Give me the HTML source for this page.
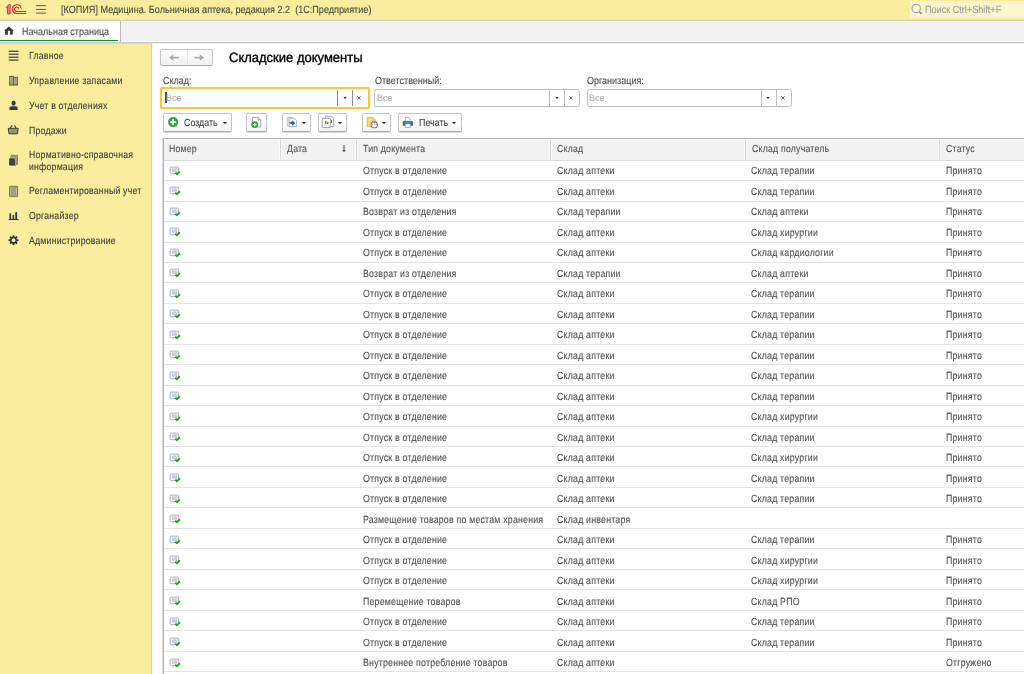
<!DOCTYPE html>
<html><head><meta charset="utf-8">
<style>
html,body{margin:0;padding:0;}
body{width:1024px;height:674px;overflow:hidden;position:relative;background:#fff;font-family:"Liberation Sans",sans-serif;color:#4d4d4d;text-rendering:geometricPrecision;}
.t{position:absolute;white-space:nowrap;will-change:transform;-webkit-text-stroke-width:0.1px;}
.ic{position:absolute;line-height:0;}
.ic svg{display:block;}
#top{position:absolute;left:0;top:0;width:1024px;height:20px;background:#fbed9e;}
#tabs{position:absolute;left:0;top:21px;width:1024px;height:21px;background:#f2f2f2;}
#tab1{position:absolute;left:0;top:0;width:120px;height:21px;background:#fff;border-right:1px solid #b9b9b9;}
#tabline{position:absolute;left:0;top:18.7px;width:118px;height:1.4px;background:#0f9030;}
#side{position:absolute;left:0;top:44px;width:151px;height:630px;background:#fbed9e;border-right:1px solid #dfd18c;}
#content{position:absolute;left:152px;top:44px;width:872px;height:630px;background:#fff;}
.hl{position:absolute;left:164px;width:860px;height:1px;background:#e4e4e4;}
.btn{position:absolute;top:113px;height:16.5px;border:1px solid #c4c4c4;border-bottom-color:#b0b0b0;border-radius:2px;background:linear-gradient(#fff 0,#fff 60%,#f1f1f1 100%);box-shadow:0 1px 0 #d4d4d4;}
.fld{position:absolute;top:89px;height:16px;border:1px solid #bcbcbc;border-radius:3px;background:#fff;}
.sep{position:absolute;top:1px;width:1px;height:16px;background:#c2c2c2;}
.tri{position:absolute;width:0;height:0;border-left:2.5px solid transparent;border-right:2.5px solid transparent;border-top:3px solid #3a3a3a;}
</style></head><body>
<div id="top">
  <svg style="position:absolute;left:0;top:0" width="30" height="20" viewBox="0 0 30 20">
    <path d="M6.1 7.5 L8.9 4.4 L10.2 4.4 L10.2 13.9 L7.5 13.9 L7.5 7.2 L6.6 8.2 Z" fill="#e8837b" stroke="#d9262b" stroke-width="0.85" stroke-linejoin="round"/>
    <path d="M21.1 8.2 A4.3 4.3 0 1 0 16.9 13.4 L25.8 13.4" stroke="#d9262b" stroke-width="1.05" fill="none" stroke-linecap="round"/>
    <path d="M18.5 8.2 A2.2 2.2 0 1 0 16.6 11.5 L25.8 11.5" stroke="#d9262b" stroke-width="1.05" fill="none" stroke-linecap="round"/>
  </svg>
  <svg style="position:absolute;left:35px;top:4px" width="12" height="11" viewBox="0 0 12 11">
    <rect x="1" y="1.1" width="10" height="1.1" fill="#6f6a52"/>
    <rect x="1" y="4.9" width="10" height="1.1" fill="#6f6a52"/>
    <rect x="1" y="8.6" width="10" height="1.1" fill="#6f6a52"/>
  </svg>
  <div class="t" style="left:60.8px;top:6.00px;font-size:9.1px;line-height:9.1px;transform:scaleY(1.15);transform-origin:0 7.70px;color:#4a4a40;">[КОПИЯ] Медицина. Больничная аптека, редакция 2.2&nbsp;&nbsp;(1С:Предприятие)</div>
  <div style="position:absolute;left:910px;top:1px;width:114px;height:17px;background:#fdf5cb;"></div>
  <svg style="position:absolute;left:910px;top:2px" width="14" height="14" viewBox="0 0 14 14"><circle cx="6.2" cy="6.4" r="4.2" stroke="#9e9e9e" stroke-width="1.1" fill="none"/><path d="M9.2 9.5 L11.6 11.9" stroke="#8e8e8e" stroke-width="1.6"/></svg>
  <div class="t" style="left:925.0px;top:5.60px;font-size:9.1px;line-height:9.1px;transform:scaleY(1.15);transform-origin:0 7.70px;color:#9c9c9c;">Поиск Ctrl+Shift+F</div>
  <div style="position:absolute;left:0;top:18px;width:1024px;height:1px;background:#fcefa6;"></div><div style="position:absolute;left:0;top:19px;width:1024px;height:1px;background:#f3e391;"></div><div style="position:absolute;left:0;top:20px;width:1024px;height:1px;background:#ddd6ab;"></div>
</div>
<div id="tabs">
  <div id="tab1">
    <svg style="position:absolute;left:2px;top:3px" width="14" height="13" viewBox="0 0 14 13"><path d="M6.9 2.6 L12 6.8 L10.8 6.8 L10.8 10.8 L8.1 10.8 L8.1 6.8 L5.9 6.8 L5.9 10.8 L3.1 10.8 L3.1 6.8 L1.9 6.8 Z" fill="#3a3a3a"/></svg>
    <div id="tabline"></div>
  </div>
  <div style="position:absolute;left:121px;top:0;width:903px;height:1px;background:#fafafa;"></div>
  <div class="t" style="left:22.1px;top:6.98px;font-size:9.0px;line-height:9.0px;transform:scaleY(1.15);transform-origin:0 7.62px;color:#4d4d4d;">Начальная страница</div>
</div>
<div style="position:absolute;left:121px;top:41px;width:903px;height:1px;background:#fbfbfb;"></div>
<div style="position:absolute;left:0;top:42px;width:152px;height:1px;background:#c9cad6;"></div>
<div style="position:absolute;left:152px;top:42px;width:872px;height:1px;background:#c6c6c8;"></div>
<div style="position:absolute;left:0;top:43px;width:152px;height:1px;background:#e9da94;"></div>
<div style="position:absolute;left:152px;top:43px;width:872px;height:1px;background:#ebebeb;"></div>
<div id="side">
</div>
<!-- sidebar icons -->
<svg style="position:absolute;left:6px;top:46px" width="16" height="16" viewBox="0 0 16 16"><g fill="#34343a"><rect x="2.7" y="4.7" width="9.8" height="1.15"/><rect x="2.7" y="7.65" width="9.8" height="1.15"/><rect x="2.7" y="10.65" width="9.8" height="1.15"/><rect x="2.7" y="13.5" width="9.8" height="1.15"/></g></svg>
<svg style="position:absolute;left:6px;top:72px" width="16" height="16" viewBox="0 0 16 16"><rect x="3.2" y="4" width="4.4" height="9.3" fill="#a9a27d"/><rect x="7.6" y="5" width="4.3" height="8.3" fill="#a9a27d"/><g fill="#5f5b48"><rect x="3.1" y="3.9" width="4.6" height="1"/><rect x="3.1" y="12.3" width="4.6" height="1.1"/><rect x="7" y="3.9" width="0.9" height="9.5"/><rect x="7.6" y="4.9" width="4.4" height="0.8"/><rect x="7.6" y="12.3" width="4.4" height="1.1"/><rect x="11.3" y="4.9" width="0.7" height="8.5"/><rect x="3.1" y="3.9" width="0.6" height="9.5"/></g></svg>
<svg style="position:absolute;left:6px;top:97px" width="16" height="16" viewBox="0 0 16 16"><ellipse cx="7.6" cy="6.1" rx="2.1" ry="2.55" fill="#37373d"/><path d="M3.4 13 L3.4 10.8 Q3.6 9.3 5.6 9.3 L9.6 9.3 Q11.6 9.3 11.6 10.8 L11.6 13 Z" fill="#37373d"/></svg>
<svg style="position:absolute;left:6px;top:121px" width="16" height="16" viewBox="0 0 16 16"><path d="M4.3 7 L6.3 4.3 M8.5 4.3 L10 7" stroke="#3e3e3a" stroke-width="1.1" fill="none"/><path d="M2.3 7.3 L12.2 7.3 L11.5 12.8 L3 12.8 Z" fill="#a39c78" stroke="#3a3a38" stroke-width="1"/><path d="M3.7 9.3 L11 9.3" stroke="#8a8464" stroke-width="0.8"/><path d="M4 11.2 L10.6 11.2" stroke="#8a8464" stroke-width="0.7"/></svg>
<svg style="position:absolute;left:6px;top:152px" width="16" height="16" viewBox="0 0 16 16"><rect x="5.6" y="3.2" width="6.1" height="9" fill="#aea781" stroke="#6f6a52" stroke-width="0.6"/><rect x="4.6" y="4.8" width="5.5" height="8.5" fill="#b5ae88" stroke="#77725a" stroke-width="0.5"/><rect x="3.6" y="6.9" width="5" height="6" fill="#45453f" stroke="#2f2f35" stroke-width="0.7"/></svg>
<svg style="position:absolute;left:6px;top:183px" width="16" height="16" viewBox="0 0 16 16"><rect x="3.5" y="3.3" width="8.1" height="10.3" rx="0.6" fill="#a69f79" stroke="#6a664f" stroke-width="0.8"/><path d="M4.6 4.5 L4.6 12.3 M10.5 4.5 L10.5 12.3" stroke="#cfc79a" stroke-width="0.7"/></svg>
<svg style="position:absolute;left:6px;top:208px" width="16" height="16" viewBox="0 0 16 16"><g fill="#30303a"><rect x="3.5" y="5.3" width="1.6" height="6.2"/><rect x="6.6" y="7" width="1.5" height="4.5"/><rect x="9.3" y="4.1" width="1.8" height="7.4"/><rect x="2.6" y="11" width="10" height="1"/></g></svg>
<svg style="position:absolute;left:6px;top:232px" width="16" height="16" viewBox="0 0 16 16"><g transform="translate(7.5,8.2)" fill="#34343a"><rect x="-0.95" y="-4.9" width="1.9" height="2.4" transform="rotate(0)"/><rect x="-0.95" y="-4.9" width="1.9" height="2.4" transform="rotate(45)"/><rect x="-0.95" y="-4.9" width="1.9" height="2.4" transform="rotate(90)"/><rect x="-0.95" y="-4.9" width="1.9" height="2.4" transform="rotate(135)"/><rect x="-0.95" y="-4.9" width="1.9" height="2.4" transform="rotate(180)"/><rect x="-0.95" y="-4.9" width="1.9" height="2.4" transform="rotate(225)"/><rect x="-0.95" y="-4.9" width="1.9" height="2.4" transform="rotate(270)"/><rect x="-0.95" y="-4.9" width="1.9" height="2.4" transform="rotate(315)"/><circle r="3.4"/><circle r="1.9" fill="#fbed9e"/></g></svg>
<div class="t" style="left:29.0px;top:51.89px;font-size:8.75px;line-height:8.75px;transform:scaleY(1.18);transform-origin:0 7.41px;color:#3f3f38;letter-spacing:0.2px;">Главное</div>
<div class="t" style="left:29.0px;top:76.79px;font-size:8.75px;line-height:8.75px;transform:scaleY(1.18);transform-origin:0 7.41px;color:#3f3f38;letter-spacing:0.2px;">Управление запасами</div>
<div class="t" style="left:29.0px;top:101.69px;font-size:8.75px;line-height:8.75px;transform:scaleY(1.18);transform-origin:0 7.41px;color:#3f3f38;letter-spacing:0.2px;">Учет в отделениях</div>
<div class="t" style="left:29.0px;top:126.59px;font-size:8.75px;line-height:8.75px;transform:scaleY(1.18);transform-origin:0 7.41px;color:#3f3f38;letter-spacing:0.2px;">Продажи</div>
<div class="t" style="left:29.0px;top:150.99px;font-size:8.75px;line-height:8.75px;transform:scaleY(1.18);transform-origin:0 7.41px;color:#3f3f38;letter-spacing:0.2px;">Нормативно-справочная</div>
<div class="t" style="left:29.0px;top:162.69px;font-size:8.75px;line-height:8.75px;transform:scaleY(1.18);transform-origin:0 7.41px;color:#3f3f38;letter-spacing:0.2px;">информация</div>
<div class="t" style="left:29.0px;top:186.89px;font-size:8.75px;line-height:8.75px;transform:scaleY(1.18);transform-origin:0 7.41px;color:#3f3f38;letter-spacing:0.2px;">Регламентированный учет</div>
<div class="t" style="left:29.0px;top:211.79px;font-size:8.75px;line-height:8.75px;transform:scaleY(1.18);transform-origin:0 7.41px;color:#3f3f38;letter-spacing:0.2px;">Органайзер</div>
<div class="t" style="left:29.0px;top:236.59px;font-size:8.75px;line-height:8.75px;transform:scaleY(1.18);transform-origin:0 7.41px;color:#3f3f38;letter-spacing:0.2px;">Администрирование</div>

<div id="content"></div>
<div style="position:absolute;left:152px;top:44px;width:1px;height:630px;background:#f6f6f6;"></div>
<!-- nav buttons -->
<div style="position:absolute;left:160px;top:49px;width:51px;height:15px;border:1px solid #c6c6c6;border-bottom-color:#aaa;border-radius:2px;background:linear-gradient(#fefefe,#f1f1f1);"></div>
<div style="position:absolute;left:186.5px;top:50px;width:1px;height:15px;background:#e3e3e3;"></div>
<svg style="position:absolute;left:156px;top:44px" width="60" height="26" viewBox="0 0 60 26"><g fill="#a9a9a9"><path d="M13.1 13.6 L17.3 10.4 L17.3 16.8 Z"/><rect x="16.5" y="12.8" width="6.4" height="1.6"/><path d="M48 13.6 L43.8 10.4 L43.8 16.8 Z"/><rect x="38.4" y="12.8" width="6.2" height="1.6"/></g></svg>
<div class="t" style="left:229.0px;top:50.70px;font-size:13.0px;line-height:13.0px;transform:scaleY(1.04);transform-origin:0 11.00px;color:#000;-webkit-text-stroke-width:0.35px;">Складские документы</div>

<!-- filters -->
<div class="t" style="left:162.5px;top:76.58px;font-size:9.0px;line-height:9.0px;transform:scaleY(1.15);transform-origin:0 7.62px;color:#4d4d4d;">Склад:</div>
<div class="t" style="left:374.5px;top:76.58px;font-size:9.0px;line-height:9.0px;transform:scaleY(1.15);transform-origin:0 7.62px;color:#4d4d4d;">Ответственный:</div>
<div class="t" style="left:586.5px;top:76.58px;font-size:9.0px;line-height:9.0px;transform:scaleY(1.15);transform-origin:0 7.62px;color:#4d4d4d;">Организация:</div>
<div style="position:absolute;left:160px;top:87px;width:206px;height:18px;border:2px solid #f8ca2a;border-radius:1.5px;background:#fff;"></div>
<div style="position:absolute;left:337px;top:90px;width:1px;height:15.5px;background:#8e8e8e;"></div>
<div style="position:absolute;left:352px;top:90px;width:1px;height:15.5px;background:#8e8e8e;"></div>
<svg style="position:absolute;left:341.50px;top:95.90px" width="6" height="4" viewBox="0 0 6 4"><path d="M1.3 1 L4.7 1 L3 3.1 Z" fill="#2a2a2a"/></svg>
<svg style="position:absolute;left:356.30px;top:94.90px" width="6" height="6" viewBox="0 0 6 6"><path d="M1.4 1.4 L4.6 4.6 M4.6 1.4 L1.4 4.6" stroke="#666" stroke-width="1"/></svg>
<div style="position:absolute;left:165px;top:92px;width:1.5px;height:11px;background:#4a4a4a;"></div>
<div class="t" style="left:166.0px;top:93.88px;font-size:9.0px;line-height:9.0px;transform:scaleY(1.04);transform-origin:0 7.62px;color:#b0b0b0;">Все</div>
<div style="position:absolute;left:374px;top:89px;width:204px;height:16px;border:1px solid #bdbdbd;border-radius:2.5px;background:#fff;"></div>
<div style="position:absolute;left:549px;top:90px;width:1px;height:16px;background:#bdbdbd;"></div>
<div style="position:absolute;left:564px;top:90px;width:1px;height:16px;background:#bdbdbd;"></div>
<svg style="position:absolute;left:553.50px;top:95.90px" width="6" height="4" viewBox="0 0 6 4"><path d="M1.3 1 L4.7 1 L3 3.1 Z" fill="#2a2a2a"/></svg>
<svg style="position:absolute;left:568.30px;top:94.90px" width="6" height="6" viewBox="0 0 6 6"><path d="M1.4 1.4 L4.6 4.6 M4.6 1.4 L1.4 4.6" stroke="#666" stroke-width="1"/></svg>
<div class="t" style="left:376.7px;top:93.88px;font-size:9.0px;line-height:9.0px;transform:scaleY(1.04);transform-origin:0 7.62px;color:#b0b0b0;">Все</div>
<div style="position:absolute;left:587px;top:89px;width:203px;height:16px;border:1px solid #bdbdbd;border-radius:2.5px;background:#fff;"></div>
<div style="position:absolute;left:761px;top:90px;width:1px;height:16px;background:#bdbdbd;"></div>
<div style="position:absolute;left:776px;top:90px;width:1px;height:16px;background:#bdbdbd;"></div>
<svg style="position:absolute;left:765.10px;top:95.90px" width="6" height="4" viewBox="0 0 6 4"><path d="M1.3 1 L4.7 1 L3 3.1 Z" fill="#2a2a2a"/></svg>
<svg style="position:absolute;left:780.40px;top:94.90px" width="6" height="6" viewBox="0 0 6 6"><path d="M1.4 1.4 L4.6 4.6 M4.6 1.4 L1.4 4.6" stroke="#666" stroke-width="1"/></svg>
<div class="t" style="left:589.0px;top:93.88px;font-size:9.0px;line-height:9.0px;transform:scaleY(1.04);transform-origin:0 7.62px;color:#b0b0b0;">Все</div>

<!-- command bar -->
<div class="btn" style="left:163px;width:66.5px;"></div>
<svg style="position:absolute;left:163px;top:111px" width="20" height="22" viewBox="0 0 20 22"><circle cx="10.1" cy="11.1" r="5" fill="#2aa845"/><path d="M10.1 8.1 L10.1 14.1 M7.1 11.1 L13.1 11.1" stroke="#fff" stroke-width="1.7"/></svg>
<div class="t" style="left:183.8px;top:119.27px;font-size:8.9px;line-height:8.9px;transform:scaleY(1.15);transform-origin:0 7.53px;color:#444;">Создать</div>
<svg style="position:absolute;left:222px;top:121.0px" width="6" height="4" viewBox="0 0 6 4"><path d="M0.9 1 L5.1 1 L3 3.2 Z" fill="#333"/></svg>

<div class="btn" style="left:246px;width:19px;"></div>
<svg style="position:absolute;left:248px;top:113px" width="20" height="20" viewBox="0 0 20 20"><path d="M4.4 4.4 L10.2 4.4 L12.8 7 L12.8 13.8 L4.4 13.8 Z" fill="#fff" stroke="#8d9ab0" stroke-width="0.9" stroke-linejoin="round"/><path d="M10.1 4.5 L10.1 7.1 L12.7 7.1" fill="#c9d2e0" stroke="#8d9ab0" stroke-width="0.8"/><circle cx="6.7" cy="11.6" r="3.4" fill="#22a33a"/><path d="M6.7 9.7 L6.7 13.5 M4.8 11.6 L8.6 11.6" stroke="#e8f8e8" stroke-width="1.2"/></svg>

<div class="btn" style="left:281.5px;width:27px;"></div>
<svg style="position:absolute;left:283px;top:113px" width="20" height="20" viewBox="0 0 20 20"><path d="M4.2 4.3 L9 4.3 L9 12.7 L4.2 12.7 Z" fill="#fff" stroke="#a0a0a0" stroke-width="0.7"/><path d="M6 5 L11 5 L13.6 7.6 L13.6 13.7 L6 13.7 Z" fill="#f6f8fb" stroke="#8fa3c0" stroke-width="0.8" stroke-linejoin="round"/><path d="M5.6 9.5 Q7.5 8.6 9.3 8.8 L9.3 7.3 L12.2 10.2 L9.3 13 L9.3 11.4 Q7.6 11.2 5.6 9.5 Z" fill="#2b65a6"/></svg>
<svg style="position:absolute;left:301.2px;top:121.0px" width="6" height="4" viewBox="0 0 6 4"><path d="M0.9 1 L5.1 1 L3 3.2 Z" fill="#333"/></svg>

<div class="btn" style="left:317.5px;width:27px;"></div>
<svg style="position:absolute;left:319px;top:113px" width="20" height="20" viewBox="0 0 20 20"><path d="M6.3 3.2 L12.5 3.2 L14.6 5.3 L14.6 13.5 L6.3 13.5 Z" fill="#f7f8fb" stroke="#8e9cb2" stroke-width="0.9" stroke-linejoin="round"/><path d="M3.3 5.3 L11.4 5.3 L11.4 14.6 L3.3 14.6 Z" fill="#fff" stroke="#8e9cb2" stroke-width="0.9" stroke-linejoin="round"/><rect x="5.9" y="7.9" width="1.5" height="3.2" fill="#e8483a"/><rect x="8" y="8.8" width="1.2" height="2.3" fill="#3aa547"/><rect x="9.3" y="9.4" width="0.6" height="1.7" fill="#e0b040"/><rect x="11.9" y="6.9" width="1.1" height="3.1" fill="#3aa547"/></svg>
<svg style="position:absolute;left:337px;top:121.0px" width="6" height="4" viewBox="0 0 6 4"><path d="M0.9 1 L5.1 1 L3 3.2 Z" fill="#333"/></svg>

<div class="btn" style="left:361.5px;width:27px;"></div>
<svg style="position:absolute;left:363px;top:113px" width="20" height="20" viewBox="0 0 20 20"><path d="M4.2 4.3 L9.8 4.3 L12.7 7.2 L12.7 13.8 L4.2 13.8 Z" fill="#f3d56a" stroke="#dfb445" stroke-width="0.8" stroke-linejoin="round"/><path d="M5.5 6.2 L8.3 6.2 M5.5 8.2 L8.8 8.2 M5.5 10.2 L7.5 10.2 M5.5 12.2 L7.5 12.2" stroke="#f8e9a8" stroke-width="0.8"/><circle cx="11.3" cy="11.7" r="3.1" fill="#fff" stroke="#4a86c6" stroke-width="1.1"/><circle cx="11.3" cy="9.6" r="0.5" fill="#c03040"/><circle cx="13.3" cy="11.5" r="0.5" fill="#c03040"/><circle cx="9.4" cy="11.7" r="0.5" fill="#e07070"/><path d="M11.3 10.3 L11.3 11.8" stroke="#4a6aa0" stroke-width="0.6"/></svg>
<svg style="position:absolute;left:380.7px;top:121.0px" width="6" height="4" viewBox="0 0 6 4"><path d="M0.9 1 L5.1 1 L3 3.2 Z" fill="#333"/></svg>

<div class="btn" style="left:397.5px;width:62px;"></div>
<svg style="position:absolute;left:398px;top:113px" width="20" height="20" viewBox="0 0 20 20"><path d="M7.3 4.4 L10.5 4.4 L11.9 6.2 L11.9 8.5 L7.3 8.5 Z" fill="#fff" stroke="#8a9ab5" stroke-width="0.8"/><path d="M5.5 8.2 L14.2 8.2 Q14.9 8.2 14.9 8.9 L14.9 12.8 L4.8 12.8 L4.8 8.9 Q4.8 8.2 5.5 8.2 Z" fill="#2c6199"/><path d="M6.2 9.4 L13.5 9.4" stroke="#6f9cc8" stroke-width="0.6"/><path d="M7.2 10.8 L12.4 10.8 L12.4 14.4 L7.2 14.4 Z" fill="#fff" stroke="#8a9ab5" stroke-width="0.8"/></svg>
<div class="t" style="left:418.8px;top:119.27px;font-size:8.9px;line-height:8.9px;transform:scaleY(1.15);transform-origin:0 7.53px;color:#444;">Печать</div>
<svg style="position:absolute;left:451.4px;top:121.0px" width="6" height="4" viewBox="0 0 6 4"><path d="M0.9 1 L5.1 1 L3 3.2 Z" fill="#333"/></svg>

<!-- table -->
<div style="position:absolute;left:162px;top:138px;width:862px;height:1px;background:#b0b0b0;"></div>
<div style="position:absolute;left:162px;top:138px;width:1px;height:536px;background:#dadada;"></div><div style="position:absolute;left:163px;top:138px;width:1px;height:536px;background:#b4b4b4;"></div>
<div style="position:absolute;left:164px;top:139px;width:860px;height:21px;background:#f2f2f2;"></div>
<div style="position:absolute;left:164px;top:160px;width:860px;height:1px;background:#dcdcdc;"></div>
<div style="position:absolute;left:280px;top:139px;width:1px;height:21px;background:#d9d9d9;"></div>
<div style="position:absolute;left:356px;top:139px;width:1px;height:21px;background:#d9d9d9;"></div>
<div style="position:absolute;left:550px;top:139px;width:1px;height:21px;background:#d9d9d9;"></div>
<div style="position:absolute;left:745px;top:139px;width:1px;height:21px;background:#d9d9d9;"></div>
<div style="position:absolute;left:939px;top:139px;width:1px;height:21px;background:#d9d9d9;"></div>
<div style="position:absolute;left:164px;top:139px;width:860px;height:1px;background:#fbfbfb;"></div>
<div style="position:absolute;left:279px;top:140px;width:1px;height:20px;background:#f9f9f9;"></div><div style="position:absolute;left:281px;top:140px;width:1px;height:20px;background:#f8f8f8;"></div>
<div style="position:absolute;left:355px;top:140px;width:1px;height:20px;background:#f9f9f9;"></div><div style="position:absolute;left:357px;top:140px;width:1px;height:20px;background:#f8f8f8;"></div>
<div style="position:absolute;left:549px;top:140px;width:1px;height:20px;background:#f9f9f9;"></div><div style="position:absolute;left:551px;top:140px;width:1px;height:20px;background:#f8f8f8;"></div>
<div style="position:absolute;left:744px;top:140px;width:1px;height:20px;background:#f9f9f9;"></div><div style="position:absolute;left:746px;top:140px;width:1px;height:20px;background:#f8f8f8;"></div>
<div style="position:absolute;left:938px;top:140px;width:1px;height:20px;background:#f9f9f9;"></div><div style="position:absolute;left:940px;top:140px;width:1px;height:20px;background:#f8f8f8;"></div>
<div class="t" style="left:169.0px;top:145.49px;font-size:8.75px;line-height:8.75px;transform:scaleY(1.18);transform-origin:0 7.41px;color:#555555;letter-spacing:0.2px;">Номер</div>
<div class="t" style="left:287.0px;top:145.49px;font-size:8.75px;line-height:8.75px;transform:scaleY(1.18);transform-origin:0 7.41px;color:#555555;letter-spacing:0.2px;">Дата</div>
<svg style="position:absolute;left:340.6px;top:144.9px" width="6" height="8" viewBox="0 0 6 8"><path d="M3 0 L3 5.6" stroke="#555" stroke-width="1.1"/><path d="M1.2 5.2 L4.8 5.2 L3 7.1 Z" fill="#222"/></svg>
<div class="t" style="left:363.0px;top:145.49px;font-size:8.75px;line-height:8.75px;transform:scaleY(1.18);transform-origin:0 7.41px;color:#555555;letter-spacing:0.2px;">Тип документа</div>
<div class="t" style="left:557.0px;top:145.49px;font-size:8.75px;line-height:8.75px;transform:scaleY(1.18);transform-origin:0 7.41px;color:#555555;letter-spacing:0.2px;">Склад</div>
<div class="t" style="left:751.5px;top:145.49px;font-size:8.75px;line-height:8.75px;transform:scaleY(1.18);transform-origin:0 7.41px;color:#555555;letter-spacing:0.2px;">Склад получатель</div>
<div class="t" style="left:946.0px;top:145.49px;font-size:8.75px;line-height:8.75px;transform:scaleY(1.18);transform-origin:0 7.41px;color:#555555;letter-spacing:0.2px;">Статус</div>
<div class="ic" style="left:166px;top:165.90px"><svg width="18" height="16" viewBox="0 0 18 16"><rect x="4.1" y="1.1" width="8.6" height="6.6" rx="1" fill="#fff" stroke="#a6afbf" stroke-width="1"/><rect x="5.9" y="2.3" width="5.4" height="3.6" fill="#c9ced8"/><path d="M9.3 6.6 L11 8.2 L13.9 5.3" stroke="#1da11d" stroke-width="1.9" fill="none" stroke-linejoin="round"/></svg></div>
<div class="t" style="left:363px;top:167.05px;font-size:8.8px;line-height:8.8px;transform:scaleY(1.18);transform-origin:0 7.45px;color:#505050;letter-spacing:0.2px;">Отпуск в отделение</div>
<div class="t" style="left:557px;top:167.05px;font-size:8.8px;line-height:8.8px;transform:scaleY(1.18);transform-origin:0 7.45px;color:#505050;letter-spacing:0.2px;">Склад аптеки</div>
<div class="t" style="left:751px;top:167.05px;font-size:8.8px;line-height:8.8px;transform:scaleY(1.18);transform-origin:0 7.45px;color:#505050;letter-spacing:0.2px;">Склад терапии</div>
<div class="t" style="left:946px;top:167.05px;font-size:8.8px;line-height:8.8px;transform:scaleY(1.18);transform-origin:0 7.45px;color:#505050;letter-spacing:0.2px;">Принято</div>
<div class="ic" style="left:166px;top:186.40px"><svg width="18" height="16" viewBox="0 0 18 16"><rect x="4.1" y="1.1" width="8.6" height="6.6" rx="1" fill="#fff" stroke="#a6afbf" stroke-width="1"/><rect x="5.9" y="2.3" width="5.4" height="3.6" fill="#c9ced8"/><path d="M9.3 6.6 L11 8.2 L13.9 5.3" stroke="#1da11d" stroke-width="1.9" fill="none" stroke-linejoin="round"/></svg></div>
<div class="t" style="left:363px;top:187.55px;font-size:8.8px;line-height:8.8px;transform:scaleY(1.18);transform-origin:0 7.45px;color:#505050;letter-spacing:0.2px;">Отпуск в отделение</div>
<div class="t" style="left:557px;top:187.55px;font-size:8.8px;line-height:8.8px;transform:scaleY(1.18);transform-origin:0 7.45px;color:#505050;letter-spacing:0.2px;">Склад аптеки</div>
<div class="t" style="left:751px;top:187.55px;font-size:8.8px;line-height:8.8px;transform:scaleY(1.18);transform-origin:0 7.45px;color:#505050;letter-spacing:0.2px;">Склад терапии</div>
<div class="t" style="left:946px;top:187.55px;font-size:8.8px;line-height:8.8px;transform:scaleY(1.18);transform-origin:0 7.45px;color:#505050;letter-spacing:0.2px;">Принято</div>
<div class="ic" style="left:166px;top:206.90px"><svg width="18" height="16" viewBox="0 0 18 16"><rect x="4.1" y="1.1" width="8.6" height="6.6" rx="1" fill="#fff" stroke="#a6afbf" stroke-width="1"/><rect x="5.9" y="2.3" width="5.4" height="3.6" fill="#c9ced8"/><path d="M9.3 6.6 L11 8.2 L13.9 5.3" stroke="#1da11d" stroke-width="1.9" fill="none" stroke-linejoin="round"/></svg></div>
<div class="t" style="left:363px;top:208.05px;font-size:8.8px;line-height:8.8px;transform:scaleY(1.18);transform-origin:0 7.45px;color:#505050;letter-spacing:0.2px;">Возврат из отделения</div>
<div class="t" style="left:557px;top:208.05px;font-size:8.8px;line-height:8.8px;transform:scaleY(1.18);transform-origin:0 7.45px;color:#505050;letter-spacing:0.2px;">Склад терапии</div>
<div class="t" style="left:751px;top:208.05px;font-size:8.8px;line-height:8.8px;transform:scaleY(1.18);transform-origin:0 7.45px;color:#505050;letter-spacing:0.2px;">Склад аптеки</div>
<div class="t" style="left:946px;top:208.05px;font-size:8.8px;line-height:8.8px;transform:scaleY(1.18);transform-origin:0 7.45px;color:#505050;letter-spacing:0.2px;">Принято</div>
<div class="ic" style="left:166px;top:227.40px"><svg width="18" height="16" viewBox="0 0 18 16"><rect x="4.1" y="1.1" width="8.6" height="6.6" rx="1" fill="#fff" stroke="#a6afbf" stroke-width="1"/><rect x="5.9" y="2.3" width="5.4" height="3.6" fill="#c9ced8"/><path d="M9.3 6.6 L11 8.2 L13.9 5.3" stroke="#1da11d" stroke-width="1.9" fill="none" stroke-linejoin="round"/></svg></div>
<div class="t" style="left:363px;top:228.55px;font-size:8.8px;line-height:8.8px;transform:scaleY(1.18);transform-origin:0 7.45px;color:#505050;letter-spacing:0.2px;">Отпуск в отделение</div>
<div class="t" style="left:557px;top:228.55px;font-size:8.8px;line-height:8.8px;transform:scaleY(1.18);transform-origin:0 7.45px;color:#505050;letter-spacing:0.2px;">Склад аптеки</div>
<div class="t" style="left:751px;top:228.55px;font-size:8.8px;line-height:8.8px;transform:scaleY(1.18);transform-origin:0 7.45px;color:#505050;letter-spacing:0.2px;">Склад хирургии</div>
<div class="t" style="left:946px;top:228.55px;font-size:8.8px;line-height:8.8px;transform:scaleY(1.18);transform-origin:0 7.45px;color:#505050;letter-spacing:0.2px;">Принято</div>
<div class="ic" style="left:166px;top:247.90px"><svg width="18" height="16" viewBox="0 0 18 16"><rect x="4.1" y="1.1" width="8.6" height="6.6" rx="1" fill="#fff" stroke="#a6afbf" stroke-width="1"/><rect x="5.9" y="2.3" width="5.4" height="3.6" fill="#c9ced8"/><path d="M9.3 6.6 L11 8.2 L13.9 5.3" stroke="#1da11d" stroke-width="1.9" fill="none" stroke-linejoin="round"/></svg></div>
<div class="t" style="left:363px;top:249.05px;font-size:8.8px;line-height:8.8px;transform:scaleY(1.18);transform-origin:0 7.45px;color:#505050;letter-spacing:0.2px;">Отпуск в отделение</div>
<div class="t" style="left:557px;top:249.05px;font-size:8.8px;line-height:8.8px;transform:scaleY(1.18);transform-origin:0 7.45px;color:#505050;letter-spacing:0.2px;">Склад аптеки</div>
<div class="t" style="left:751px;top:249.05px;font-size:8.8px;line-height:8.8px;transform:scaleY(1.18);transform-origin:0 7.45px;color:#505050;letter-spacing:0.2px;">Склад кардиологии</div>
<div class="t" style="left:946px;top:249.05px;font-size:8.8px;line-height:8.8px;transform:scaleY(1.18);transform-origin:0 7.45px;color:#505050;letter-spacing:0.2px;">Принято</div>
<div class="ic" style="left:166px;top:268.40px"><svg width="18" height="16" viewBox="0 0 18 16"><rect x="4.1" y="1.1" width="8.6" height="6.6" rx="1" fill="#fff" stroke="#a6afbf" stroke-width="1"/><rect x="5.9" y="2.3" width="5.4" height="3.6" fill="#c9ced8"/><path d="M9.3 6.6 L11 8.2 L13.9 5.3" stroke="#1da11d" stroke-width="1.9" fill="none" stroke-linejoin="round"/></svg></div>
<div class="t" style="left:363px;top:269.55px;font-size:8.8px;line-height:8.8px;transform:scaleY(1.18);transform-origin:0 7.45px;color:#505050;letter-spacing:0.2px;">Возврат из отделения</div>
<div class="t" style="left:557px;top:269.55px;font-size:8.8px;line-height:8.8px;transform:scaleY(1.18);transform-origin:0 7.45px;color:#505050;letter-spacing:0.2px;">Склад терапии</div>
<div class="t" style="left:751px;top:269.55px;font-size:8.8px;line-height:8.8px;transform:scaleY(1.18);transform-origin:0 7.45px;color:#505050;letter-spacing:0.2px;">Склад аптеки</div>
<div class="t" style="left:946px;top:269.55px;font-size:8.8px;line-height:8.8px;transform:scaleY(1.18);transform-origin:0 7.45px;color:#505050;letter-spacing:0.2px;">Принято</div>
<div class="ic" style="left:166px;top:288.90px"><svg width="18" height="16" viewBox="0 0 18 16"><rect x="4.1" y="1.1" width="8.6" height="6.6" rx="1" fill="#fff" stroke="#a6afbf" stroke-width="1"/><rect x="5.9" y="2.3" width="5.4" height="3.6" fill="#c9ced8"/><path d="M9.3 6.6 L11 8.2 L13.9 5.3" stroke="#1da11d" stroke-width="1.9" fill="none" stroke-linejoin="round"/></svg></div>
<div class="t" style="left:363px;top:290.05px;font-size:8.8px;line-height:8.8px;transform:scaleY(1.18);transform-origin:0 7.45px;color:#505050;letter-spacing:0.2px;">Отпуск в отделение</div>
<div class="t" style="left:557px;top:290.05px;font-size:8.8px;line-height:8.8px;transform:scaleY(1.18);transform-origin:0 7.45px;color:#505050;letter-spacing:0.2px;">Склад аптеки</div>
<div class="t" style="left:751px;top:290.05px;font-size:8.8px;line-height:8.8px;transform:scaleY(1.18);transform-origin:0 7.45px;color:#505050;letter-spacing:0.2px;">Склад терапии</div>
<div class="t" style="left:946px;top:290.05px;font-size:8.8px;line-height:8.8px;transform:scaleY(1.18);transform-origin:0 7.45px;color:#505050;letter-spacing:0.2px;">Принято</div>
<div class="ic" style="left:166px;top:309.40px"><svg width="18" height="16" viewBox="0 0 18 16"><rect x="4.1" y="1.1" width="8.6" height="6.6" rx="1" fill="#fff" stroke="#a6afbf" stroke-width="1"/><rect x="5.9" y="2.3" width="5.4" height="3.6" fill="#c9ced8"/><path d="M9.3 6.6 L11 8.2 L13.9 5.3" stroke="#1da11d" stroke-width="1.9" fill="none" stroke-linejoin="round"/></svg></div>
<div class="t" style="left:363px;top:310.55px;font-size:8.8px;line-height:8.8px;transform:scaleY(1.18);transform-origin:0 7.45px;color:#505050;letter-spacing:0.2px;">Отпуск в отделение</div>
<div class="t" style="left:557px;top:310.55px;font-size:8.8px;line-height:8.8px;transform:scaleY(1.18);transform-origin:0 7.45px;color:#505050;letter-spacing:0.2px;">Склад аптеки</div>
<div class="t" style="left:751px;top:310.55px;font-size:8.8px;line-height:8.8px;transform:scaleY(1.18);transform-origin:0 7.45px;color:#505050;letter-spacing:0.2px;">Склад терапии</div>
<div class="t" style="left:946px;top:310.55px;font-size:8.8px;line-height:8.8px;transform:scaleY(1.18);transform-origin:0 7.45px;color:#505050;letter-spacing:0.2px;">Принято</div>
<div class="ic" style="left:166px;top:329.90px"><svg width="18" height="16" viewBox="0 0 18 16"><rect x="4.1" y="1.1" width="8.6" height="6.6" rx="1" fill="#fff" stroke="#a6afbf" stroke-width="1"/><rect x="5.9" y="2.3" width="5.4" height="3.6" fill="#c9ced8"/><path d="M9.3 6.6 L11 8.2 L13.9 5.3" stroke="#1da11d" stroke-width="1.9" fill="none" stroke-linejoin="round"/></svg></div>
<div class="t" style="left:363px;top:331.05px;font-size:8.8px;line-height:8.8px;transform:scaleY(1.18);transform-origin:0 7.45px;color:#505050;letter-spacing:0.2px;">Отпуск в отделение</div>
<div class="t" style="left:557px;top:331.05px;font-size:8.8px;line-height:8.8px;transform:scaleY(1.18);transform-origin:0 7.45px;color:#505050;letter-spacing:0.2px;">Склад аптеки</div>
<div class="t" style="left:751px;top:331.05px;font-size:8.8px;line-height:8.8px;transform:scaleY(1.18);transform-origin:0 7.45px;color:#505050;letter-spacing:0.2px;">Склад терапии</div>
<div class="t" style="left:946px;top:331.05px;font-size:8.8px;line-height:8.8px;transform:scaleY(1.18);transform-origin:0 7.45px;color:#505050;letter-spacing:0.2px;">Принято</div>
<div class="ic" style="left:166px;top:350.40px"><svg width="18" height="16" viewBox="0 0 18 16"><rect x="4.1" y="1.1" width="8.6" height="6.6" rx="1" fill="#fff" stroke="#a6afbf" stroke-width="1"/><rect x="5.9" y="2.3" width="5.4" height="3.6" fill="#c9ced8"/><path d="M9.3 6.6 L11 8.2 L13.9 5.3" stroke="#1da11d" stroke-width="1.9" fill="none" stroke-linejoin="round"/></svg></div>
<div class="t" style="left:363px;top:351.55px;font-size:8.8px;line-height:8.8px;transform:scaleY(1.18);transform-origin:0 7.45px;color:#505050;letter-spacing:0.2px;">Отпуск в отделение</div>
<div class="t" style="left:557px;top:351.55px;font-size:8.8px;line-height:8.8px;transform:scaleY(1.18);transform-origin:0 7.45px;color:#505050;letter-spacing:0.2px;">Склад аптеки</div>
<div class="t" style="left:751px;top:351.55px;font-size:8.8px;line-height:8.8px;transform:scaleY(1.18);transform-origin:0 7.45px;color:#505050;letter-spacing:0.2px;">Склад терапии</div>
<div class="t" style="left:946px;top:351.55px;font-size:8.8px;line-height:8.8px;transform:scaleY(1.18);transform-origin:0 7.45px;color:#505050;letter-spacing:0.2px;">Принято</div>
<div class="ic" style="left:166px;top:370.90px"><svg width="18" height="16" viewBox="0 0 18 16"><rect x="4.1" y="1.1" width="8.6" height="6.6" rx="1" fill="#fff" stroke="#a6afbf" stroke-width="1"/><rect x="5.9" y="2.3" width="5.4" height="3.6" fill="#c9ced8"/><path d="M9.3 6.6 L11 8.2 L13.9 5.3" stroke="#1da11d" stroke-width="1.9" fill="none" stroke-linejoin="round"/></svg></div>
<div class="t" style="left:363px;top:372.05px;font-size:8.8px;line-height:8.8px;transform:scaleY(1.18);transform-origin:0 7.45px;color:#505050;letter-spacing:0.2px;">Отпуск в отделение</div>
<div class="t" style="left:557px;top:372.05px;font-size:8.8px;line-height:8.8px;transform:scaleY(1.18);transform-origin:0 7.45px;color:#505050;letter-spacing:0.2px;">Склад аптеки</div>
<div class="t" style="left:751px;top:372.05px;font-size:8.8px;line-height:8.8px;transform:scaleY(1.18);transform-origin:0 7.45px;color:#505050;letter-spacing:0.2px;">Склад терапии</div>
<div class="t" style="left:946px;top:372.05px;font-size:8.8px;line-height:8.8px;transform:scaleY(1.18);transform-origin:0 7.45px;color:#505050;letter-spacing:0.2px;">Принято</div>
<div class="ic" style="left:166px;top:391.40px"><svg width="18" height="16" viewBox="0 0 18 16"><rect x="4.1" y="1.1" width="8.6" height="6.6" rx="1" fill="#fff" stroke="#a6afbf" stroke-width="1"/><rect x="5.9" y="2.3" width="5.4" height="3.6" fill="#c9ced8"/><path d="M9.3 6.6 L11 8.2 L13.9 5.3" stroke="#1da11d" stroke-width="1.9" fill="none" stroke-linejoin="round"/></svg></div>
<div class="t" style="left:363px;top:392.55px;font-size:8.8px;line-height:8.8px;transform:scaleY(1.18);transform-origin:0 7.45px;color:#505050;letter-spacing:0.2px;">Отпуск в отделение</div>
<div class="t" style="left:557px;top:392.55px;font-size:8.8px;line-height:8.8px;transform:scaleY(1.18);transform-origin:0 7.45px;color:#505050;letter-spacing:0.2px;">Склад аптеки</div>
<div class="t" style="left:751px;top:392.55px;font-size:8.8px;line-height:8.8px;transform:scaleY(1.18);transform-origin:0 7.45px;color:#505050;letter-spacing:0.2px;">Склад терапии</div>
<div class="t" style="left:946px;top:392.55px;font-size:8.8px;line-height:8.8px;transform:scaleY(1.18);transform-origin:0 7.45px;color:#505050;letter-spacing:0.2px;">Принято</div>
<div class="ic" style="left:166px;top:411.90px"><svg width="18" height="16" viewBox="0 0 18 16"><rect x="4.1" y="1.1" width="8.6" height="6.6" rx="1" fill="#fff" stroke="#a6afbf" stroke-width="1"/><rect x="5.9" y="2.3" width="5.4" height="3.6" fill="#c9ced8"/><path d="M9.3 6.6 L11 8.2 L13.9 5.3" stroke="#1da11d" stroke-width="1.9" fill="none" stroke-linejoin="round"/></svg></div>
<div class="t" style="left:363px;top:413.05px;font-size:8.8px;line-height:8.8px;transform:scaleY(1.18);transform-origin:0 7.45px;color:#505050;letter-spacing:0.2px;">Отпуск в отделение</div>
<div class="t" style="left:557px;top:413.05px;font-size:8.8px;line-height:8.8px;transform:scaleY(1.18);transform-origin:0 7.45px;color:#505050;letter-spacing:0.2px;">Склад аптеки</div>
<div class="t" style="left:751px;top:413.05px;font-size:8.8px;line-height:8.8px;transform:scaleY(1.18);transform-origin:0 7.45px;color:#505050;letter-spacing:0.2px;">Склад хирургии</div>
<div class="t" style="left:946px;top:413.05px;font-size:8.8px;line-height:8.8px;transform:scaleY(1.18);transform-origin:0 7.45px;color:#505050;letter-spacing:0.2px;">Принято</div>
<div class="ic" style="left:166px;top:432.40px"><svg width="18" height="16" viewBox="0 0 18 16"><rect x="4.1" y="1.1" width="8.6" height="6.6" rx="1" fill="#fff" stroke="#a6afbf" stroke-width="1"/><rect x="5.9" y="2.3" width="5.4" height="3.6" fill="#c9ced8"/><path d="M9.3 6.6 L11 8.2 L13.9 5.3" stroke="#1da11d" stroke-width="1.9" fill="none" stroke-linejoin="round"/></svg></div>
<div class="t" style="left:363px;top:433.55px;font-size:8.8px;line-height:8.8px;transform:scaleY(1.18);transform-origin:0 7.45px;color:#505050;letter-spacing:0.2px;">Отпуск в отделение</div>
<div class="t" style="left:557px;top:433.55px;font-size:8.8px;line-height:8.8px;transform:scaleY(1.18);transform-origin:0 7.45px;color:#505050;letter-spacing:0.2px;">Склад аптеки</div>
<div class="t" style="left:751px;top:433.55px;font-size:8.8px;line-height:8.8px;transform:scaleY(1.18);transform-origin:0 7.45px;color:#505050;letter-spacing:0.2px;">Склад терапии</div>
<div class="t" style="left:946px;top:433.55px;font-size:8.8px;line-height:8.8px;transform:scaleY(1.18);transform-origin:0 7.45px;color:#505050;letter-spacing:0.2px;">Принято</div>
<div class="ic" style="left:166px;top:452.90px"><svg width="18" height="16" viewBox="0 0 18 16"><rect x="4.1" y="1.1" width="8.6" height="6.6" rx="1" fill="#fff" stroke="#a6afbf" stroke-width="1"/><rect x="5.9" y="2.3" width="5.4" height="3.6" fill="#c9ced8"/><path d="M9.3 6.6 L11 8.2 L13.9 5.3" stroke="#1da11d" stroke-width="1.9" fill="none" stroke-linejoin="round"/></svg></div>
<div class="t" style="left:363px;top:454.05px;font-size:8.8px;line-height:8.8px;transform:scaleY(1.18);transform-origin:0 7.45px;color:#505050;letter-spacing:0.2px;">Отпуск в отделение</div>
<div class="t" style="left:557px;top:454.05px;font-size:8.8px;line-height:8.8px;transform:scaleY(1.18);transform-origin:0 7.45px;color:#505050;letter-spacing:0.2px;">Склад аптеки</div>
<div class="t" style="left:751px;top:454.05px;font-size:8.8px;line-height:8.8px;transform:scaleY(1.18);transform-origin:0 7.45px;color:#505050;letter-spacing:0.2px;">Склад хирургии</div>
<div class="t" style="left:946px;top:454.05px;font-size:8.8px;line-height:8.8px;transform:scaleY(1.18);transform-origin:0 7.45px;color:#505050;letter-spacing:0.2px;">Принято</div>
<div class="ic" style="left:166px;top:473.40px"><svg width="18" height="16" viewBox="0 0 18 16"><rect x="4.1" y="1.1" width="8.6" height="6.6" rx="1" fill="#fff" stroke="#a6afbf" stroke-width="1"/><rect x="5.9" y="2.3" width="5.4" height="3.6" fill="#c9ced8"/><path d="M9.3 6.6 L11 8.2 L13.9 5.3" stroke="#1da11d" stroke-width="1.9" fill="none" stroke-linejoin="round"/></svg></div>
<div class="t" style="left:363px;top:474.55px;font-size:8.8px;line-height:8.8px;transform:scaleY(1.18);transform-origin:0 7.45px;color:#505050;letter-spacing:0.2px;">Отпуск в отделение</div>
<div class="t" style="left:557px;top:474.55px;font-size:8.8px;line-height:8.8px;transform:scaleY(1.18);transform-origin:0 7.45px;color:#505050;letter-spacing:0.2px;">Склад аптеки</div>
<div class="t" style="left:751px;top:474.55px;font-size:8.8px;line-height:8.8px;transform:scaleY(1.18);transform-origin:0 7.45px;color:#505050;letter-spacing:0.2px;">Склад терапии</div>
<div class="t" style="left:946px;top:474.55px;font-size:8.8px;line-height:8.8px;transform:scaleY(1.18);transform-origin:0 7.45px;color:#505050;letter-spacing:0.2px;">Принято</div>
<div class="ic" style="left:166px;top:493.90px"><svg width="18" height="16" viewBox="0 0 18 16"><rect x="4.1" y="1.1" width="8.6" height="6.6" rx="1" fill="#fff" stroke="#a6afbf" stroke-width="1"/><rect x="5.9" y="2.3" width="5.4" height="3.6" fill="#c9ced8"/><path d="M9.3 6.6 L11 8.2 L13.9 5.3" stroke="#1da11d" stroke-width="1.9" fill="none" stroke-linejoin="round"/></svg></div>
<div class="t" style="left:363px;top:495.05px;font-size:8.8px;line-height:8.8px;transform:scaleY(1.18);transform-origin:0 7.45px;color:#505050;letter-spacing:0.2px;">Отпуск в отделение</div>
<div class="t" style="left:557px;top:495.05px;font-size:8.8px;line-height:8.8px;transform:scaleY(1.18);transform-origin:0 7.45px;color:#505050;letter-spacing:0.2px;">Склад аптеки</div>
<div class="t" style="left:751px;top:495.05px;font-size:8.8px;line-height:8.8px;transform:scaleY(1.18);transform-origin:0 7.45px;color:#505050;letter-spacing:0.2px;">Склад терапии</div>
<div class="t" style="left:946px;top:495.05px;font-size:8.8px;line-height:8.8px;transform:scaleY(1.18);transform-origin:0 7.45px;color:#505050;letter-spacing:0.2px;">Принято</div>
<div class="ic" style="left:166px;top:514.40px"><svg width="18" height="16" viewBox="0 0 18 16"><rect x="4.1" y="1.1" width="8.6" height="6.6" rx="1" fill="#fff" stroke="#a6afbf" stroke-width="1"/><rect x="5.9" y="2.3" width="5.4" height="3.6" fill="#c9ced8"/><path d="M9.3 6.6 L11 8.2 L13.9 5.3" stroke="#1da11d" stroke-width="1.9" fill="none" stroke-linejoin="round"/></svg></div>
<div class="t" style="left:363px;top:515.55px;font-size:8.8px;line-height:8.8px;transform:scaleY(1.18);transform-origin:0 7.45px;color:#505050;letter-spacing:0.2px;">Размещение товаров по местам хранения</div>
<div class="t" style="left:557px;top:515.55px;font-size:8.8px;line-height:8.8px;transform:scaleY(1.18);transform-origin:0 7.45px;color:#505050;letter-spacing:0.2px;">Склад инвентаря</div>
<div class="ic" style="left:166px;top:534.90px"><svg width="18" height="16" viewBox="0 0 18 16"><rect x="4.1" y="1.1" width="8.6" height="6.6" rx="1" fill="#fff" stroke="#a6afbf" stroke-width="1"/><rect x="5.9" y="2.3" width="5.4" height="3.6" fill="#c9ced8"/><path d="M9.3 6.6 L11 8.2 L13.9 5.3" stroke="#1da11d" stroke-width="1.9" fill="none" stroke-linejoin="round"/></svg></div>
<div class="t" style="left:363px;top:536.05px;font-size:8.8px;line-height:8.8px;transform:scaleY(1.18);transform-origin:0 7.45px;color:#505050;letter-spacing:0.2px;">Отпуск в отделение</div>
<div class="t" style="left:557px;top:536.05px;font-size:8.8px;line-height:8.8px;transform:scaleY(1.18);transform-origin:0 7.45px;color:#505050;letter-spacing:0.2px;">Склад аптеки</div>
<div class="t" style="left:751px;top:536.05px;font-size:8.8px;line-height:8.8px;transform:scaleY(1.18);transform-origin:0 7.45px;color:#505050;letter-spacing:0.2px;">Склад терапии</div>
<div class="t" style="left:946px;top:536.05px;font-size:8.8px;line-height:8.8px;transform:scaleY(1.18);transform-origin:0 7.45px;color:#505050;letter-spacing:0.2px;">Принято</div>
<div class="ic" style="left:166px;top:555.40px"><svg width="18" height="16" viewBox="0 0 18 16"><rect x="4.1" y="1.1" width="8.6" height="6.6" rx="1" fill="#fff" stroke="#a6afbf" stroke-width="1"/><rect x="5.9" y="2.3" width="5.4" height="3.6" fill="#c9ced8"/><path d="M9.3 6.6 L11 8.2 L13.9 5.3" stroke="#1da11d" stroke-width="1.9" fill="none" stroke-linejoin="round"/></svg></div>
<div class="t" style="left:363px;top:556.55px;font-size:8.8px;line-height:8.8px;transform:scaleY(1.18);transform-origin:0 7.45px;color:#505050;letter-spacing:0.2px;">Отпуск в отделение</div>
<div class="t" style="left:557px;top:556.55px;font-size:8.8px;line-height:8.8px;transform:scaleY(1.18);transform-origin:0 7.45px;color:#505050;letter-spacing:0.2px;">Склад аптеки</div>
<div class="t" style="left:751px;top:556.55px;font-size:8.8px;line-height:8.8px;transform:scaleY(1.18);transform-origin:0 7.45px;color:#505050;letter-spacing:0.2px;">Склад хирургии</div>
<div class="t" style="left:946px;top:556.55px;font-size:8.8px;line-height:8.8px;transform:scaleY(1.18);transform-origin:0 7.45px;color:#505050;letter-spacing:0.2px;">Принято</div>
<div class="ic" style="left:166px;top:575.90px"><svg width="18" height="16" viewBox="0 0 18 16"><rect x="4.1" y="1.1" width="8.6" height="6.6" rx="1" fill="#fff" stroke="#a6afbf" stroke-width="1"/><rect x="5.9" y="2.3" width="5.4" height="3.6" fill="#c9ced8"/><path d="M9.3 6.6 L11 8.2 L13.9 5.3" stroke="#1da11d" stroke-width="1.9" fill="none" stroke-linejoin="round"/></svg></div>
<div class="t" style="left:363px;top:577.05px;font-size:8.8px;line-height:8.8px;transform:scaleY(1.18);transform-origin:0 7.45px;color:#505050;letter-spacing:0.2px;">Отпуск в отделение</div>
<div class="t" style="left:557px;top:577.05px;font-size:8.8px;line-height:8.8px;transform:scaleY(1.18);transform-origin:0 7.45px;color:#505050;letter-spacing:0.2px;">Склад аптеки</div>
<div class="t" style="left:751px;top:577.05px;font-size:8.8px;line-height:8.8px;transform:scaleY(1.18);transform-origin:0 7.45px;color:#505050;letter-spacing:0.2px;">Склад хирургии</div>
<div class="t" style="left:946px;top:577.05px;font-size:8.8px;line-height:8.8px;transform:scaleY(1.18);transform-origin:0 7.45px;color:#505050;letter-spacing:0.2px;">Принято</div>
<div class="ic" style="left:166px;top:596.40px"><svg width="18" height="16" viewBox="0 0 18 16"><rect x="4.1" y="1.1" width="8.6" height="6.6" rx="1" fill="#fff" stroke="#a6afbf" stroke-width="1"/><rect x="5.9" y="2.3" width="5.4" height="3.6" fill="#c9ced8"/><path d="M9.3 6.6 L11 8.2 L13.9 5.3" stroke="#1da11d" stroke-width="1.9" fill="none" stroke-linejoin="round"/></svg></div>
<div class="t" style="left:363px;top:597.55px;font-size:8.8px;line-height:8.8px;transform:scaleY(1.18);transform-origin:0 7.45px;color:#505050;letter-spacing:0.2px;">Перемещение товаров</div>
<div class="t" style="left:557px;top:597.55px;font-size:8.8px;line-height:8.8px;transform:scaleY(1.18);transform-origin:0 7.45px;color:#505050;letter-spacing:0.2px;">Склад аптеки</div>
<div class="t" style="left:751px;top:597.55px;font-size:8.8px;line-height:8.8px;transform:scaleY(1.18);transform-origin:0 7.45px;color:#505050;letter-spacing:0.2px;">Склад РПО</div>
<div class="t" style="left:946px;top:597.55px;font-size:8.8px;line-height:8.8px;transform:scaleY(1.18);transform-origin:0 7.45px;color:#505050;letter-spacing:0.2px;">Принято</div>
<div class="ic" style="left:166px;top:616.90px"><svg width="18" height="16" viewBox="0 0 18 16"><rect x="4.1" y="1.1" width="8.6" height="6.6" rx="1" fill="#fff" stroke="#a6afbf" stroke-width="1"/><rect x="5.9" y="2.3" width="5.4" height="3.6" fill="#c9ced8"/><path d="M9.3 6.6 L11 8.2 L13.9 5.3" stroke="#1da11d" stroke-width="1.9" fill="none" stroke-linejoin="round"/></svg></div>
<div class="t" style="left:363px;top:618.05px;font-size:8.8px;line-height:8.8px;transform:scaleY(1.18);transform-origin:0 7.45px;color:#505050;letter-spacing:0.2px;">Отпуск в отделение</div>
<div class="t" style="left:557px;top:618.05px;font-size:8.8px;line-height:8.8px;transform:scaleY(1.18);transform-origin:0 7.45px;color:#505050;letter-spacing:0.2px;">Склад аптеки</div>
<div class="t" style="left:751px;top:618.05px;font-size:8.8px;line-height:8.8px;transform:scaleY(1.18);transform-origin:0 7.45px;color:#505050;letter-spacing:0.2px;">Склад терапии</div>
<div class="t" style="left:946px;top:618.05px;font-size:8.8px;line-height:8.8px;transform:scaleY(1.18);transform-origin:0 7.45px;color:#505050;letter-spacing:0.2px;">Принято</div>
<div class="ic" style="left:166px;top:637.40px"><svg width="18" height="16" viewBox="0 0 18 16"><rect x="4.1" y="1.1" width="8.6" height="6.6" rx="1" fill="#fff" stroke="#a6afbf" stroke-width="1"/><rect x="5.9" y="2.3" width="5.4" height="3.6" fill="#c9ced8"/><path d="M9.3 6.6 L11 8.2 L13.9 5.3" stroke="#1da11d" stroke-width="1.9" fill="none" stroke-linejoin="round"/></svg></div>
<div class="t" style="left:363px;top:638.55px;font-size:8.8px;line-height:8.8px;transform:scaleY(1.18);transform-origin:0 7.45px;color:#505050;letter-spacing:0.2px;">Отпуск в отделение</div>
<div class="t" style="left:557px;top:638.55px;font-size:8.8px;line-height:8.8px;transform:scaleY(1.18);transform-origin:0 7.45px;color:#505050;letter-spacing:0.2px;">Склад аптеки</div>
<div class="t" style="left:751px;top:638.55px;font-size:8.8px;line-height:8.8px;transform:scaleY(1.18);transform-origin:0 7.45px;color:#505050;letter-spacing:0.2px;">Склад терапии</div>
<div class="t" style="left:946px;top:638.55px;font-size:8.8px;line-height:8.8px;transform:scaleY(1.18);transform-origin:0 7.45px;color:#505050;letter-spacing:0.2px;">Принято</div>
<div class="ic" style="left:166px;top:657.90px"><svg width="18" height="16" viewBox="0 0 18 16"><rect x="4.1" y="1.1" width="8.6" height="6.6" rx="1" fill="#fff" stroke="#a6afbf" stroke-width="1"/><rect x="5.9" y="2.3" width="5.4" height="3.6" fill="#c9ced8"/><path d="M9.3 6.6 L11 8.2 L13.9 5.3" stroke="#1da11d" stroke-width="1.9" fill="none" stroke-linejoin="round"/></svg></div>
<div class="t" style="left:363px;top:659.05px;font-size:8.8px;line-height:8.8px;transform:scaleY(1.18);transform-origin:0 7.45px;color:#505050;letter-spacing:0.2px;">Внутреннее потребление товаров</div>
<div class="t" style="left:557px;top:659.05px;font-size:8.8px;line-height:8.8px;transform:scaleY(1.18);transform-origin:0 7.45px;color:#505050;letter-spacing:0.2px;">Склад аптеки</div>
<div class="t" style="left:946px;top:659.05px;font-size:8.8px;line-height:8.8px;transform:scaleY(1.18);transform-origin:0 7.45px;color:#505050;letter-spacing:0.2px;">Отгружено</div>
<div class="hl" style="top:180px"></div>
<div class="hl" style="top:201px"></div>
<div class="hl" style="top:221px"></div>
<div class="hl" style="top:242px"></div>
<div class="hl" style="top:262px"></div>
<div class="hl" style="top:282px"></div>
<div class="hl" style="top:303px"></div>
<div class="hl" style="top:323px"></div>
<div class="hl" style="top:344px"></div>
<div class="hl" style="top:364px"></div>
<div class="hl" style="top:385px"></div>
<div class="hl" style="top:405px"></div>
<div class="hl" style="top:426px"></div>
<div class="hl" style="top:446px"></div>
<div class="hl" style="top:466px"></div>
<div class="hl" style="top:487px"></div>
<div class="hl" style="top:507px"></div>
<div class="hl" style="top:528px"></div>
<div class="hl" style="top:548px"></div>
<div class="hl" style="top:569px"></div>
<div class="hl" style="top:589px"></div>
<div class="hl" style="top:610px"></div>
<div class="hl" style="top:630px"></div>
<div class="hl" style="top:651px"></div>
<div class="hl" style="top:671px"></div>
</body></html>
